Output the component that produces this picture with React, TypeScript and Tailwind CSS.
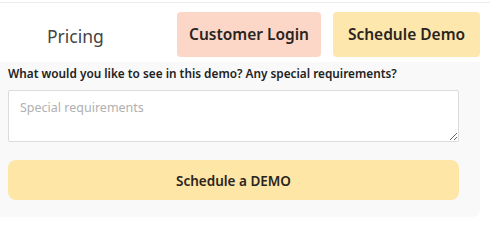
import React from "react";

export default function App() {
  return (
    <div
      className="w-[500px] h-[245px] bg-white overflow-hidden"
      style={{ fontFamily: '"Noto Sans", "Open Sans", Arial, sans-serif' }}
    >
      <div className="h-[2px]" />
      <div className="border-t border-[#ececec] h-[60px] flex items-start w-[490px]">
        <div className="pl-[47px] pt-[21px] text-[17.5px] text-[#444] leading-[24px] w-[177px]">Pricing</div>
        <div className="mt-[9px] h-[45px] w-[144px] rounded-[4px] bg-[#fcd7c8] flex items-center justify-center text-[15.5px] font-semibold text-[#2a2420]">
          Customer Login
        </div>
        <div className="ml-[12px] mt-[9px] h-[45px] w-[147px] rounded-[4px] bg-[#fde7ac] flex items-center justify-center text-[15.5px] font-semibold text-[#2a2420]">
          Schedule Demo
        </div>
      </div>
      <div className="w-[480px] bg-[#f9f9f9] rounded-br-lg px-[8px] pt-[3px] pb-[17px]">
        <div className="text-[11.8px] font-semibold text-[#222] leading-[16px]">
          What would you like to see in this demo? Any special requirements?
        </div>
        <textarea
          className="mt-[9px] block w-[451px] h-[52px] bg-white border border-[#dcdcdc] rounded-[2px] px-[11px] pt-[8px] pb-[4px] text-[12.5px] placeholder:text-[#b0b0b0] outline-none"
          placeholder="Special requirements"
        />
        <button className="mt-[18px] w-[451px] h-[40px] pt-[2px] rounded-[8px] bg-[#fde6a6] text-[13.5px] font-semibold text-[#2a2420] flex items-center justify-center">
          Schedule a DEMO
        </button>
      </div>
    </div>
  );
}
